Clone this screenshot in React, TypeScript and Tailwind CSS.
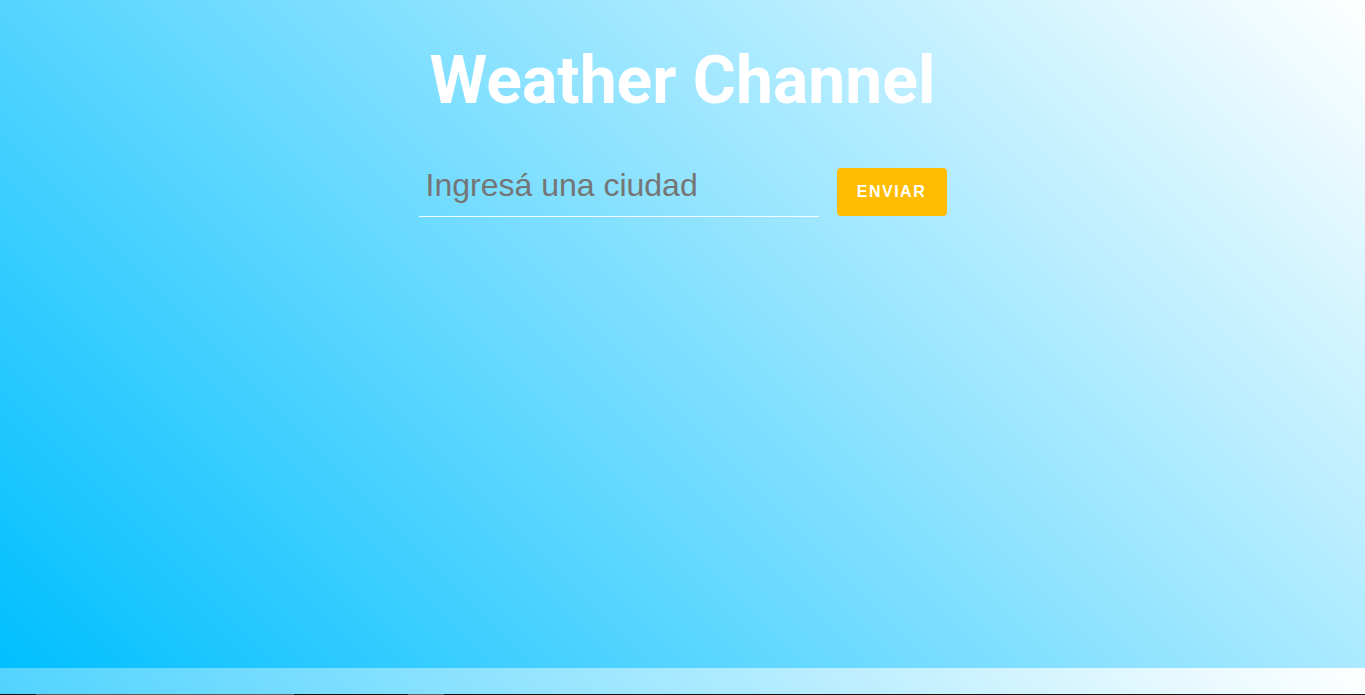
export default function App() {
  return (
    <div className="w-[1365px] h-[695px] overflow-hidden flex flex-col">
      <div className="h-[694px] bg-[linear-gradient(45deg,#00bfff,#ffffff)] bg-[length:100%_668px] bg-repeat-y">
        <div className="flex flex-col items-center">
          <h1 className="mt-[48px] text-[66px] leading-none font-bold text-white font-['Roboto',sans-serif]">
            Weather Channel
          </h1>
          <div className="mt-[54px] flex items-start gap-[18px]">
            <input
              type="text"
              placeholder="Ingresá una ciudad"
              className="w-[400px] h-[49px] bg-transparent border-b border-white/90 pl-[7px] pr-[6px] pb-[13px] text-[32px] text-white placeholder:text-[#757575] outline-none font-['Liberation_Sans',Arial,sans-serif]"
            />
            <button className="w-[110px] h-[48px] rounded-[4px] bg-[#ffbc00] text-white font-bold text-[16px] tracking-[1.5px] font-['Liberation_Sans',Arial,sans-serif]">
              ENVIAR
            </button>
          </div>
        </div>
      </div>
      <div className="h-px flex">
        <div className="w-[36px] bg-[#111]" />
        <div className="w-[258px] bg-[#5a5a5a]" />
        <div className="w-[114px] bg-[#111]" />
        <div className="w-[36px] bg-[#5a5a5a]" />
        <div className="flex-1 bg-[#111]" />
      </div>
    </div>
  );
}
